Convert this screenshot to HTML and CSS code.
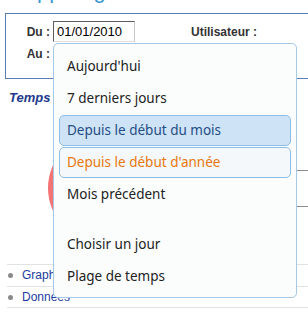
FILE: index.html
```
<!DOCTYPE html>
<html lang="fr">
<head>
	<meta charset="UTF-8">
	<title>Rapport</title>
	<link rel="stylesheet" href="styles.css">
</head>
<body>
	<h1 class="title">Rapport général</h1>
	<div class="filter">
		<label class="lbl">Du :</label>
		<input class="date" type="text" value="01/01/2010">
		<label class="lbl user">Utilisateur :</label>
		<label class="lbl">Au :</label>
	</div>
	<h2 class="section">Temps</h2>
	<div class="chart">
		<div class="pie"></div>
		<div class="legend"></div>
	</div>
	<ul class="links">
		<li><a href="#">Graphique</a></li>
		<li><a href="#">Données</a></li>
	</ul>

	<ul class="menu">
		<li>Aujourd'hui</li>
		<li>7 derniers jours</li>
		<li class="hover">Depuis le début du mois</li>
		<li class="active">Depuis le début d'année</li>
		<li>Mois précédent</li>
		<li class="sep">Choisir un jour</li>
		<li>Plage de temps</li>
	</ul>
</body>
</html>
```

FILE: styles.css
```
* {margin:0; padding:0; box-sizing:border-box;}
body {width:308px; height:321px; overflow:hidden; position:relative; font:12px "Liberation Sans",Arial,sans-serif; color:#333; background:#fff;}
.title {font:normal 22px/22px "Liberation Sans",Arial,sans-serif; color:#3a9ad2; margin:-20px 0 0 9px; white-space:nowrap;}
.filter {margin:11px 0 0 5px; width:304px; height:66px; border:1px solid #5a7db3; display:grid; grid-template-columns:44px 135px auto; grid-template-rows:21px 21px; column-gap:3px; row-gap:1px; padding-top:7px; align-items:center;}
.lbl {font-weight:bold; text-align:right; color:#333;}
.lbl.user {text-align:left;}
.date {width:82px; height:21px; border:1px solid #8a8a8a; border-top-color:#5c5c5c; border-left-color:#5c5c5c; border-right-color:#c8c8c8; border-bottom-color:#e0e0e0; font:13px "Liberation Sans",Arial,sans-serif; color:#000; padding:0 3px;}
.section {font:italic bold 13px/16px "Liberation Sans",Arial,sans-serif; color:#1e3a8c; margin:11px 0 0 9px;}
.chart {display:flex; margin-top:27px; height:110px;}
.pie {width:110px; height:110px; border-radius:50%; background:#f47373; margin-left:48px;}
.legend {margin-left:auto; width:80px; height:37px; margin-top:37px; border-top:1px solid #8c8c8c; border-bottom:1px solid #8c8c8c;}
.links {list-style:none; margin:21px 0 0 7px;}
.links li {height:22px; line-height:21px; border-top:1px solid #e2e2e2; padding-left:15px; position:relative;}
.links li:last-child {border-bottom:1px solid #e2e2e2;}
.links li:before {content:""; position:absolute; left:1px; top:8px; width:5px; height:5px; border-radius:50%; background:#8a8a8a;}
.links a {color:#1d3b9e; text-decoration:none; font-size:12px;}
.menu {position:absolute; left:53px; top:43px; width:244px; height:255px; list-style:none; background:#fbfdfd; border:1px solid #a5c8e6; border-radius:5px; padding:7px 5px 6px; font:13.5px "Noto Sans","Open Sans",sans-serif; color:#222;}
.menu li {height:31px; line-height:29px; margin-bottom:1px; padding-left:7px; border:1px solid transparent; border-radius:5px;}
.menu li.hover {background:#cfe3f6; border-color:#8cbde8; color:#1f4e85;}
.menu li.active {background:#f4f8fa; border-color:#8cbde8; color:#e8770e;}
.menu li.sep {margin-top:19px;}
```
